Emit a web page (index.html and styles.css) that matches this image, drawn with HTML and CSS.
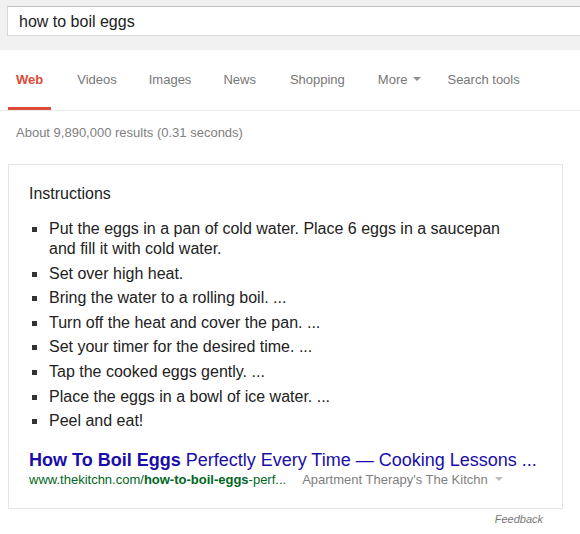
FILE: index.html
```html
<!DOCTYPE html>
<html>
<head>
<meta charset="utf-8">
<link rel="stylesheet" href="styles.css">
</head>
<body>
<header class="header">
  <div class="searchbox">how to boil eggs</div>
</header>
<nav class="tabs">
  <span class="tab active">Web</span>
  <span class="tab">Videos</span>
  <span class="tab">Images</span>
  <span class="tab">News</span>
  <span class="tab shopping">Shopping</span>
  <span class="tab more">More<span class="caret"></span></span>
  <span class="tab tools">Search tools</span>
</nav>
<div class="stats">About 9,890,000 results (0.31 seconds)</div>
<div class="card">
  <div class="heading">Instructions</div>
  <ul class="steps">
    <li>Put the eggs in a pan of cold water. Place 6 eggs in a saucepan and fill it with cold water.</li>
    <li>Set over high heat.</li>
    <li>Bring the water to a rolling boil. ...</li>
    <li>Turn off the heat and cover the pan. ...</li>
    <li>Set your timer for the desired time. ...</li>
    <li>Tap the cooked eggs gently. ...</li>
    <li>Place the eggs in a bowl of ice water. ...</li>
    <li>Peel and eat!</li>
  </ul>
  <a class="title"><b>How To Boil Eggs</b> Perfectly Every Time — Cooking Lessons ...</a>
  <div class="cite"><span class="url">www.thekitchn.com/<b>how-to-boil-eggs</b>-perf...</span><span class="source">Apartment Therapy's The Kitchn</span><span class="caret light"></span></div>
</div>
<div class="feedback">Feedback</div>
</body>
</html>
```
FILE: styles.css
```css
* { box-sizing: border-box; }
body {
  margin: 0;
  background: #fff;
  font-family: "Liberation Sans", Arial, sans-serif;
  color: #222;
}
.header {
  height: 50px;
  background: #f1f1f1;
  padding: 6px 0 0 7px;
}
.searchbox {
  height: 30px;
  width: 600px;
  background: #fff;
  border: 1px solid #d9d9d9;
  border-top-color: #c0c0c0;
  font-size: 16px;
  line-height: 28px;
  padding: 1px 0 0 11px;
  color: #222;
}
.tabs {
  display: flex;
  height: 61px;
  border-bottom: 1px solid #ebebeb;
}
.tab {
  display: flex;
  align-items: center;
  height: 60px;
  margin: 0 8px;
  padding: 1px 8px 0 8px;
  font-size: 13px;
  color: #777;
  border-bottom: 3px solid transparent;
}
.tab.active {
  color: #dd4b39;
  font-weight: bold;
  border-bottom-color: #dd4b39;
  margin-right: 10px;
}
.tab.shopping { margin-left: 10px; }
.tab.more { margin-left: 9px; }
.tab.tools { margin-left: 2px; }
.caret {
  display: inline-block;
  width: 0;
  height: 0;
  margin-left: 6px;
  border-top: 4px solid #909090;
  border-left: 4px solid transparent;
  border-right: 4px solid transparent;
}
.caret.light { border-top-color: #bbb; margin-left: 7px; margin-bottom: 2px; }
.stats {
  margin-top: 14px;
  padding-left: 16px;
  font-size: 13px;
  line-height: 16px;
  color: #808080;
}
.card {
  margin: 23px 0 0 8px;
  width: 555px;
  border: 1px solid #e5e5e5;
  padding: 19px 20px 20px 20px;
}
.heading {
  font-size: 16px;
  line-height: 20px;
}
.steps {
  list-style: none;
  margin: 15px 0 0 0;
  padding: 0 40px 0 0;
  font-size: 16px;
  line-height: 20px;
}
.steps li {
  position: relative;
  padding-left: 20px;
  margin-bottom: 4.6px;
}
.steps li::before {
  content: "";
  position: absolute;
  left: 3px;
  top: 8px;
  width: 5px;
  height: 5px;
  background: #333;
}
.title {
  display: block;
  margin-top: 18px;
  font-size: 18px;
  line-height: 23px;
  color: #1a0dab;
  white-space: nowrap;
}
.cite {
  display: flex;
  align-items: center;
  font-size: 13px;
  line-height: 16px;
  white-space: nowrap;
}
.url { color: #006621; }
.source { color: #808080; margin-left: 16px; }
.feedback {
  width: 563px;
  margin-top: 3px;
  padding-right: 20px;
  text-align: right;
  font-size: 11px;
  line-height: 14px;
  font-style: italic;
  color: #777;
}
```
